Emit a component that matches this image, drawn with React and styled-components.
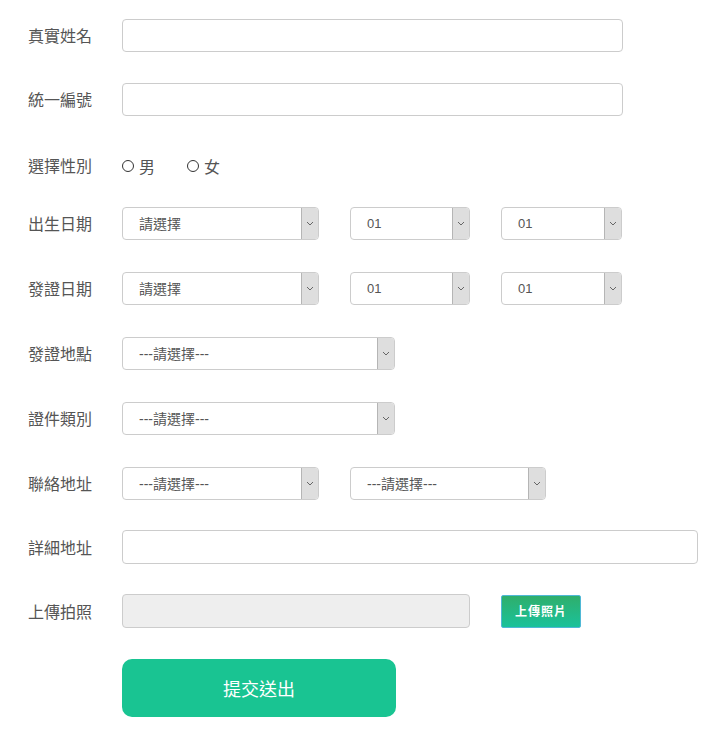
import React from 'react'
import styled, { createGlobalStyle } from 'styled-components'

const GlobalStyle = createGlobalStyle`
  html, body {
    margin: 0;
    padding: 0;
    background: #fff;
  }
  body {
    font-family: "Liberation Sans", "Noto Sans CJK TC", sans-serif;
    color: #555;
  }
`

const Form = styled.form`
  display: flex;
  flex-direction: column;
  padding: 19px 0 0 28px;
  width: 703px;
  box-sizing: border-box;
`

const Row = styled.div`
  display: flex;
  align-items: center;
  min-height: ${p => p.$h || 33}px;
  margin-top: ${p => (p.$mt === undefined ? 32 : p.$mt)}px;
`

const Label = styled.label`
  width: 94px;
  flex-shrink: 0;
  font-size: 16px;
  color: #555;
  line-height: 20px;
  padding-top: 3px;
`

const Controls = styled.div`
  display: flex;
  align-items: center;
  gap: 31px;
`

const TextInput = styled.input`
  width: ${p => p.$w}px;
  height: ${p => p.$h || 33}px;
  box-sizing: border-box;
  border: 1px solid #ccc;
  border-radius: 4px;
  background: ${p => (p.$disabled ? '#eee' : '#fff')};
  padding: 0 10px;
  font-size: 14px;
  font-family: inherit;
  outline: none;
`

const SelectWrap = styled.div`
  position: relative;
  width: ${p => p.$w}px;
  height: 33px;
`

const Select = styled.select`
  appearance: none;
  -webkit-appearance: none;
  width: 100%;
  height: 100%;
  box-sizing: border-box;
  border: 1px solid #ccc;
  border-radius: 4px;
  background: #fff;
  padding: 0 20px 0 ${p => p.$pl || 16}px;
  font-size: ${p => p.$fs || 14}px;
  font-family: inherit;
  color: #555;
  outline: none;
`

const Arrow = styled.span`
  position: absolute;
  top: 1px;
  right: 1px;
  bottom: 1px;
  width: 16px;
  background: #dedede;
  border-left: 1px solid #b5b5b5;
  border-radius: 0 3px 3px 0;
  display: flex;
  align-items: center;
  justify-content: center;
  pointer-events: none;
`

const RadioGroup = styled.div`
  display: flex;
  align-items: center;
  gap: 32px;
  padding-top: 2px;
`

const RadioLabel = styled.label`
  display: flex;
  align-items: center;
  gap: 5px;
  font-size: 16px;
  color: #555;
`

const Radio = styled.input`
  appearance: none;
  -webkit-appearance: none;
  margin: 0;
  width: 12px;
  height: 12px;
  border: 1px solid #333;
  border-radius: 50%;
  background: #fff;
`

const UploadButton = styled.button`
  width: 80px;
  height: 33px;
  border: 1px solid #4fb8d6;
  border-radius: 2px;
  background: linear-gradient(to bottom, #2fae6c, #1ac29a);
  color: #fff;
  font-size: 12px;
  font-weight: bold;
  font-family: "Liberation Serif", "Noto Sans CJK TC", serif;
  letter-spacing: 1px;
  padding: 0;
`

const SubmitButton = styled.button`
  margin-left: 94px;
  width: 274px;
  height: 58px;
  border: none;
  border-radius: 10px;
  background: #19c492;
  color: #fff;
  font-size: 18px;
  font-family: inherit;
  margin-top: 31px;
`

function Chevron() {
  return (
    <svg width="8" height="5" viewBox="0 0 8 5">
      <path d="M1 1 L4 4 L7 1" fill="none" stroke="#666" strokeWidth="1" />
    </svg>
  )
}

function DropDown({ w, value, pl, fs }) {
  return (
    <SelectWrap $w={w}>
      <Select $pl={pl} $fs={fs} defaultValue={value}>
        <option>{value}</option>
      </Select>
      <Arrow><Chevron /></Arrow>
    </SelectWrap>
  )
}

function DateRow({ label, mt }) {
  return (
    <Row $mt={mt}>
      <Label>{label}</Label>
      <Controls>
        <DropDown w={197} value="請選擇" />
        <DropDown w={120} value="01" fs={13} />
        <DropDown w={121} value="01" fs={13} />
      </Controls>
    </Row>
  )
}

export default function App() {
  return (
    <>
      <GlobalStyle />
      <Form onSubmit={e => e.preventDefault()}>
        <Row $mt={0}>
          <Label>真實姓名</Label>
          <TextInput $w={501} />
        </Row>
        <Row $mt={31}>
          <Label>統一編號</Label>
          <TextInput $w={501} />
        </Row>
        <Row $mt={36} $h={26}>
          <Label>選擇性別</Label>
          <RadioGroup>
            <RadioLabel><Radio type="radio" name="sex" />男</RadioLabel>
            <RadioLabel><Radio type="radio" name="sex" />女</RadioLabel>
          </RadioGroup>
        </Row>
        <DateRow label="出生日期" mt={29} />
        <DateRow label="發證日期" />
        <Row>
          <Label>發證地點</Label>
          <DropDown w={273} value="---請選擇---" />
        </Row>
        <Row>
          <Label>證件類別</Label>
          <DropDown w={273} value="---請選擇---" />
        </Row>
        <Row>
          <Label>聯絡地址</Label>
          <Controls>
            <DropDown w={197} value="---請選擇---" />
            <DropDown w={196} value="---請選擇---" />
          </Controls>
        </Row>
        <Row $mt={30}>
          <Label>詳細地址</Label>
          <TextInput $w={576} $h={34} />
        </Row>
        <Row $mt={30}>
          <Label>上傳拍照</Label>
          <Controls>
            <TextInput $w={348} $h={34} $disabled readOnly />
            <UploadButton type="button">上傳照片</UploadButton>
          </Controls>
        </Row>
        <SubmitButton type="submit">提交送出</SubmitButton>
      </Form>
    </>
  )
}
